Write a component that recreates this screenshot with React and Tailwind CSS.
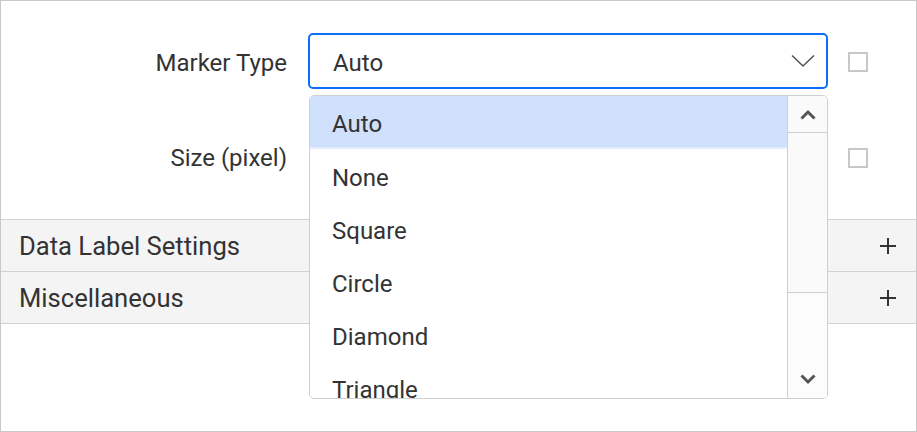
import React from "react";

function Plus() {
  return (
    <svg width="18" height="18" viewBox="0 0 18 18" className="shrink-0">
      <path d="M9 1v16M1 9h16" stroke="#333" strokeWidth="2" fill="none" />
    </svg>
  );
}

function Checkbox() {
  return <div className="w-[20px] h-[20px] border-2 border-[#c8c8c8] bg-white shrink-0" />;
}

export default function App() {
  const items = ["Auto", "None", "Square", "Circle", "Diamond", "Triangle"];
  return (
    <div className="relative w-[917px] h-[432px] border border-[#c8c8c8] bg-white text-[#333] overflow-hidden font-[Roboto,sans-serif]">
      <div className="pt-[32px]">
        <div className="flex items-center h-[56px]">
          <div className="w-[286px] text-right text-[24px] leading-none pt-[3px]">Marker Type</div>
          <div className="ml-[21px] w-[520px] h-[56px] border-2 border-[#0d6efd] rounded-[5px] flex items-center justify-between pl-[23px] pr-[11px] text-[24px]">
            <span className="leading-none pt-[3px]">Auto</span>
            <svg width="24" height="14" viewBox="0 0 24 14">
              <path d="M1 1.5l11 10.5 11-10.5" stroke="#555" strokeWidth="1.6" fill="none" />
            </svg>
          </div>
          <div className="ml-[20px] pt-[2px]">
            <Checkbox />
          </div>
        </div>
        <div className="flex items-center h-[56px] mt-[40px]">
          <div className="w-[286px] text-right text-[24px] leading-none pt-[2px]">Size (pixel)</div>
          <div className="ml-[21px] w-[520px] h-[56px]" />
          <div className="ml-[20px] pt-[2px]">
            <Checkbox />
          </div>
        </div>
        <div className="mt-[34px]">
          <div className="h-[52px] border-t border-[#d2d2d2] bg-[#f4f4f4] flex items-center justify-between pl-[18px] pr-[19px]">
            <span className="text-[25.6px] leading-none pt-[3px]">Data Label Settings</span>
            <Plus />
          </div>
          <div className="h-[53px] border-y border-[#d2d2d2] bg-[#f4f4f4] flex items-center justify-between pl-[18px] pr-[19px]">
            <span className="text-[25.6px] leading-none pt-[3px]">Miscellaneous</span>
            <Plus />
          </div>
        </div>
      </div>

      <div className="absolute left-[308px] top-[94px] w-[519px] h-[304px] border-[1.5px] border-[#cfcfcf] rounded-[5px] bg-white flex overflow-hidden">
        <div className="flex-1 overflow-hidden">
          {items.map((it, i) => (
            <div
              key={it}
              className={
                "h-[53px] pl-[22px] pt-[4px] flex items-center text-[24px] shrink-0 " +
                (i === 0 ? "bg-[#cfe1fc] border-b-2 border-[#e3edfd]" : "bg-white")
              }
            >
              {it}
            </div>
          ))}
        </div>
        <div className="w-[40px] border-l-[1.5px] border-[#cfcfcf] bg-[#fafafa] flex flex-col">
          <div className="h-[37px] border-b-[1.5px] border-[#cfcfcf] flex items-center justify-center">
            <svg width="16" height="11" viewBox="0 0 16 11">
              <path d="M1.5 9.5L8 3l6.5 6.5" stroke="#555" strokeWidth="3" fill="none" />
            </svg>
          </div>
          <div className="h-[160px] border-b-[1.5px] border-[#cfcfcf] bg-[#fafafa]" />
          <div className="flex-1 bg-[#fcfcfc]" />
          <div className="h-[38px] flex items-center justify-center bg-[#fcfcfc]">
            <svg width="16" height="11" viewBox="0 0 16 11">
              <path d="M1.5 1.5L8 8l6.5-6.5" stroke="#555" strokeWidth="3" fill="none" />
            </svg>
          </div>
        </div>
      </div>
    </div>
  );
}
